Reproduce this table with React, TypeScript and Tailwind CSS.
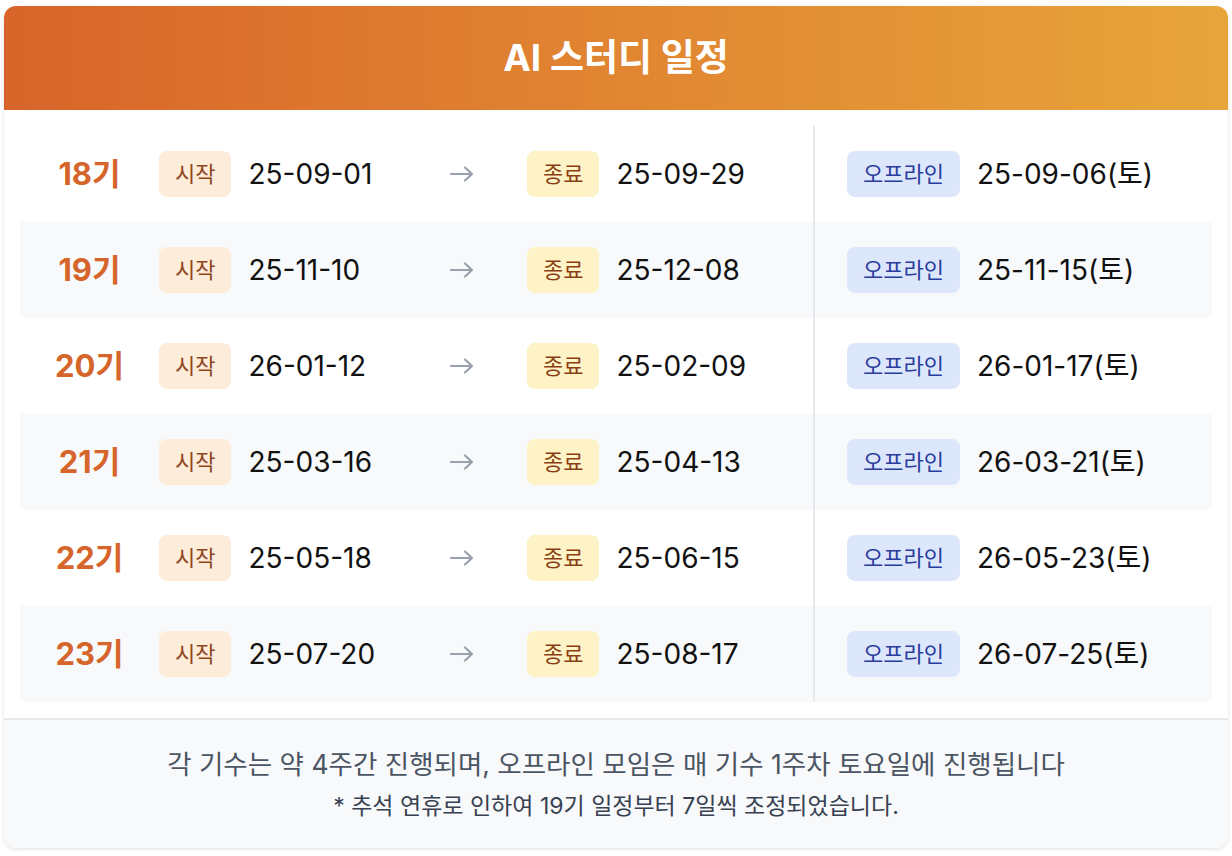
const rows = [
  { gen: "18기", start: "25-09-01", end: "25-09-29", offline: "25-09-06(토)" },
  { gen: "19기", start: "25-11-10", end: "25-12-08", offline: "25-11-15(토)" },
  { gen: "20기", start: "26-01-12", end: "25-02-09", offline: "26-01-17(토)" },
  { gen: "21기", start: "25-03-16", end: "25-04-13", offline: "26-03-21(토)" },
  { gen: "22기", start: "25-05-18", end: "25-06-15", offline: "26-05-23(토)" },
  { gen: "23기", start: "25-07-20", end: "25-08-17", offline: "26-07-25(토)" },
];

const Arrow = () => (
  <svg width="24" height="18" viewBox="0 0 24 18" fill="none" className="text-gray-400">
    <path d="M1 9H22M15 2.5L22 9L15 15.5" stroke="currentColor" strokeWidth="2.2" strokeLinecap="round" strokeLinejoin="round" />
  </svg>
);

const Badge = ({ label, tone }: { label: string; tone: "start" | "end" | "offline" }) => {
  const cls =
    tone === "start"
      ? "bg-[#fdecd9] text-[#8f4520]"
      : tone === "end"
      ? "bg-[#fdf3c6] text-[#8a3f12]"
      : "bg-[#dde7fb] text-[#2a3d9c]";
  return (
    <span className={`inline-flex items-center justify-center h-[46px] px-4 rounded-lg text-[22px] ${cls}`}>
      {label}
    </span>
  );
};

export default function App() {
  return (
    <div className="min-h-screen bg-white pt-[6px] px-[4px] font-['Inter','Noto_Sans_CJK_KR',sans-serif]">
      <div className="w-[1224px] rounded-xl bg-white shadow-[0_1px_4px_rgba(0,0,0,0.12)] overflow-hidden">
        <div className="h-[104px] flex items-center justify-center bg-gradient-to-r from-[#d8642a] to-[#e7a53a]">
          <h1 className="text-white font-bold text-[37px]">AI 스터디 일정</h1>
        </div>

        <div className="p-4">
          {rows.map((r, i) => (
            <div key={r.gen} className={`flex items-center h-24 ${i % 2 === 1 ? "bg-[#f8f9fb]" : "bg-white"}`}>
              <div className="w-[139px] text-center text-[31px] font-bold text-[#d5652b]">{r.gen}</div>
              <div className="w-[291px] flex items-center gap-[17px]">
                <Badge label="시작" tone="start" />
                <span className="text-[28px] text-[#111]">{r.start}</span>
              </div>
              <Arrow />
              <div className="ml-[53px] w-[286px] h-full flex items-center gap-[17px]">
                <Badge label="종료" tone="end" />
                <span className="text-[28px] text-[#111]">{r.end}</span>
              </div>
              <div className="h-full flex items-center gap-[17px] pl-[32px] border-l-2 border-[#e6e8ec]">
                <Badge label="오프라인" tone="offline" />
                <span className="text-[28px] text-[#111]">{r.offline}</span>
              </div>
            </div>
          ))}
        </div>

        <div className="border-t-2 border-[#e6e8ec] bg-[#f8f9fb] h-[130px] flex flex-col items-center pt-[27px] gap-[10px]">
          <p className="text-[26.5px] text-[#4b5563] leading-[34px]">
            각 기수는 약 4주간 진행되며, 오프라인 모임은 매 기수 1주차 토요일에 진행됩니다
          </p>
          <p className="text-[23px] text-[#374151] leading-[30px]">
            * 추석 연휴로 인하여 19기 일정부터 7일씩 조정되었습니다.
          </p>
        </div>
      </div>
    </div>
  );
}
